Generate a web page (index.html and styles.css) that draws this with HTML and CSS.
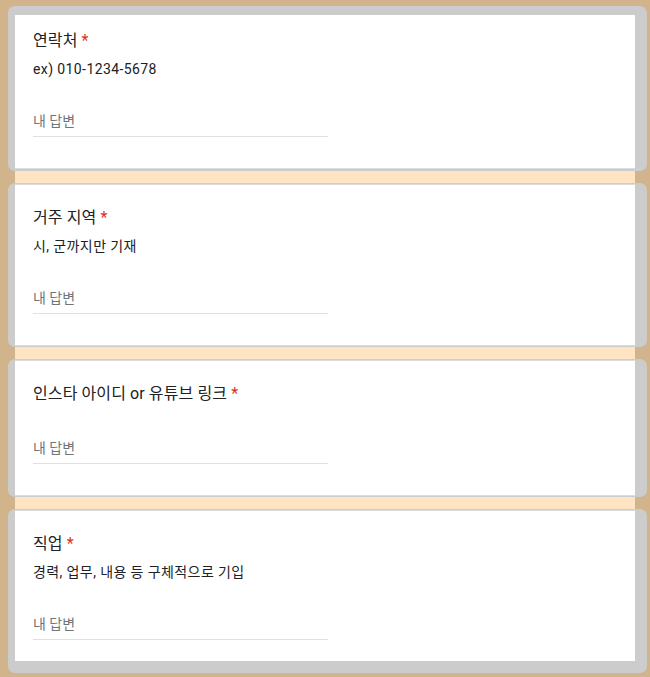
FILE: index.html
```html
<!DOCTYPE html>
<html lang="ko">
<head>
<meta charset="utf-8">
<title>응답</title>
<link rel="stylesheet" href="styles.css">
</head>
<body>
<main class="form">
  <section class="frame frame-first">
    <div class="card card-first">
      <div class="q-title">연락처 <span class="req">*</span></div>
      <div class="q-desc">ex) 010-1234-5678</div>
      <div class="answer"><span class="placeholder">내 답변</span></div>
    </div>
  </section>
  <div class="gap"></div>
  <section class="frame">
    <div class="card">
      <div class="q-title">거주 지역 <span class="req">*</span></div>
      <div class="q-desc">시, 군까지만 기재</div>
      <div class="answer"><span class="placeholder">내 답변</span></div>
    </div>
  </section>
  <div class="gap"></div>
  <section class="frame">
    <div class="card">
      <div class="q-title">인스타 아이디 or 유튜브 링크 <span class="req">*</span></div>
      <div class="answer"><span class="placeholder">내 답변</span></div>
    </div>
  </section>
  <div class="gap"></div>
  <section class="frame frame-last">
    <div class="card card-last">
      <div class="q-title">직업 <span class="req">*</span></div>
      <div class="q-desc">경력, 업무, 내용 등 구체적으로 기입</div>
      <div class="answer"><span class="placeholder">내 답변</span></div>
    </div>
  </section>
</main>
</body>
</html>
```

FILE: styles.css
```css
html, body {
  margin: 0;
  padding: 0;
}
body {
  background: #d2b48c;
  height: 677px;
  overflow: hidden;
  font-family: Roboto, "Noto Sans CJK KR", sans-serif;
  color: #202124;
}
.form {
  display: flex;
  flex-direction: column;
  padding-top: 6px;
}
.frame {
  margin-left: 8px;
  width: 620px;
  padding: 1px 12px 1px 7px;
  background: #cccccc;
  border-radius: 7px;
}
.frame-first {
  padding-top: 9px;
  padding-bottom: 2px;
}
.frame-last {
  padding-bottom: 12px;
}
.gap {
  margin-left: 15px;
  width: 620px;
  height: 12px;
  background: #ffe4c4;
}
.card {
  background: #ffffff;
  border-top: 1px solid #dadce0;
  border-bottom: 1px solid #dadce0;
  padding: 21px 18px 31px;
}
.card-first {
  border-top: 0;
  padding-top: 14px;
}
.card-last {
  border-bottom: 0;
  padding-bottom: 21px;
}
.q-title {
  font-size: 16px;
  line-height: 24px;
  letter-spacing: 0.1px;
}
.req {
  color: #d93025;
}
.q-desc {
  margin-top: 6px;
  font-size: 14px;
  line-height: 20px;
  letter-spacing: 0.4px;
}
.answer {
  margin-top: 32px;
  width: 295px;
  padding-bottom: 5px;
  border-bottom: 1px solid #e0e0e0;
}
.placeholder {
  display: block;
  font-size: 14px;
  line-height: 20px;
  color: #70757a;
}
```
